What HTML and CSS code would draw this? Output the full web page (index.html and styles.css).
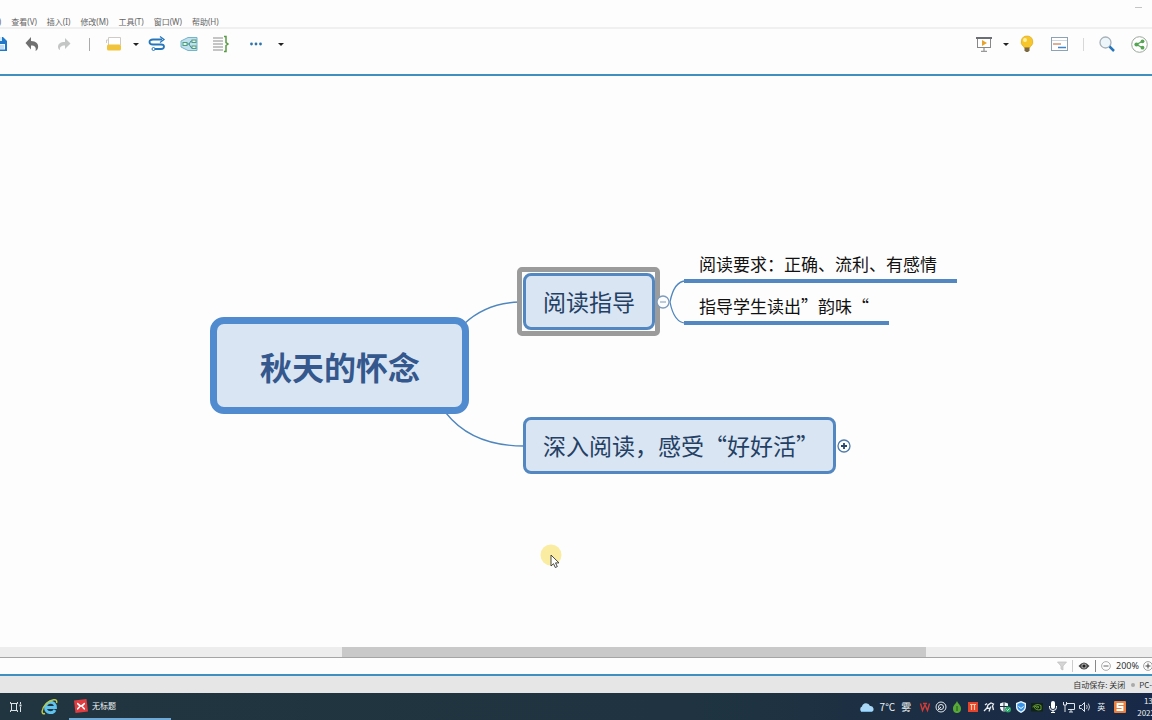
FILE: index.html
```html
<!DOCTYPE html>
<html lang="zh-CN">
<head>
<meta charset="utf-8">
<title>无标题</title>
<link rel="stylesheet" href="styles.css">
</head>
<body>
<div class="app">
  <header class="menubar">
    <nav class="menus">
      <button class="menu">编辑(E)</button>
      <button class="menu">查看(V)</button>
      <button class="menu">插入(I)</button>
      <button class="menu">修改(M)</button>
      <button class="menu">工具(T)</button>
      <button class="menu">窗口(W)</button>
      <button class="menu">帮助(H)</button>
    </nav>
    <button class="minimize" aria-label="最小化"></button>
  </header>

  <div class="toolbar">
    <div class="tools tools-left">
      <button class="tool" aria-label="保存"><svg width="16" height="16" viewBox="0 0 16 16"><path d="M1 1h10l4 4v10H1z" fill="#1f78c8"/><path d="M4 1h6v4H4z" fill="#d8ebfa"/><path d="M3 8h10v5.500H3z" fill="#eef7ff"/><path d="M4 10h8M4 12h8" stroke="#8cc0e8"/></svg></button>
      <button class="tool" aria-label="撤销"><svg width="14" height="16" viewBox="0 0 14 16"><path d="M6 1v4c5 0 8 3 7 7-.4 1.500-1.500 2.500-2.500 3 1-3.500-.5-5.500-4.500-5.500v4L.5 7z" fill="#707070"/></svg></button>
      <button class="tool" aria-label="重做"><svg width="14" height="16" viewBox="0 0 14 16"><path d="M8 2v4C3 6 1 8 1 11c0 1.500 1 3 2 3-.5-3 1-4.500 5-4.500V13l5.500-5.500z" fill="#c4c6c6"/></svg></button>
      <span class="divider"></span>
      <button class="tool" aria-label="主题"><svg width="18" height="16" viewBox="0 0 18 16"><path d="M3.500 9V1.500h12V9" fill="#fff" stroke="#cfcac4"/><path d="M1.500 7V4h2" fill="none" stroke="#cfcac4"/><rect x="2" y="8.500" width="14" height="6" rx="1.500" fill="#f0c43c"/></svg></button>
      <button class="caret" aria-label="主题选项"></button>
      <button class="tool" aria-label="联系"><svg width="18" height="18" viewBox="0 0 18 18" fill="none" stroke="#2776bb"><path d="M14 4.500H5c-2.500 0-3.500 1-3.500 2.500S3 9.500 5 9.500h8c2 0 3 .5 3 2s-1 2.500-3 2.500H7" stroke-width="1.800"/><path d="M12 1.500l4 3-4 3" stroke-width="1.300"/><circle cx="5.500" cy="14" r="1.500"/></svg></button>
      <button class="tool" aria-label="外框"><svg width="18" height="16" viewBox="0 0 18 16" fill="none"><path d="M1 5l7-3.500h9v13H8L1 11z" fill="#bfe0ec" stroke="#75b5cc"/><path d="M6 8h3l2-3h1M9 8l2 3.500h1" stroke="#408f8d"/><rect x="3" y="6.500" width="4" height="3" fill="#e5f4e8" stroke="#4e9c82"/><rect x="12" y="4" width="4" height="2.500" fill="#e5f4e8" stroke="#4e9c82"/><rect x="12" y="10" width="4" height="2.500" fill="#e5f4e8" stroke="#4e9c82"/></svg></button>
      <button class="tool" aria-label="概要"><svg width="18" height="18" viewBox="0 0 18 18" fill="none"><path d="M1 3h10M1 6h10M1 9h10M1 12h10M1 15h10" stroke="#b2b2b2" stroke-width="1.400"/><path d="M12 1.500h2v6l2 1.500-2 1.500v6h-2" stroke="#5a9a46" stroke-width="1.500"/></svg></button>
      <button class="tool tool-more" aria-label="更多"><svg width="14" height="4" viewBox="0 0 14 4" fill="#2d74ad"><circle cx="2.500" cy="2" r="1.400"/><circle cx="7" cy="2" r="1.400"/><circle cx="11.500" cy="2" r="1.400"/></svg></button>
      <button class="caret" aria-label="更多选项"></button>
    </div>
    <div class="tools tools-right">
      <button class="tool" aria-label="演示"><svg width="16" height="16" viewBox="0 0 16 16"><rect x="1.500" y="2.500" width="13" height="9" fill="#fff" stroke="#888"/><path d="M0 1h16v2H0z" fill="#6b6f75"/><path d="M6 4l5 3-5 3z" fill="#e8a32e"/><path d="M8 12v3M5 15.500h6" stroke="#999" stroke-width="1.300"/></svg></button>
      <button class="caret" aria-label="演示选项"></button>
      <button class="tool" aria-label="头脑风暴"><svg width="14" height="18" viewBox="0 0 14 18"><path d="M7 1a5.800 5.800 0 0 0-3.500 10.500L4.500 13h5l1-1.500A5.800 5.800 0 0 0 7 1z" fill="#f6c62c" stroke="#d9a51c" stroke-width=".6"/><circle cx="5" cy="5" r="2" fill="#fff0a0"/><path d="M4.500 12.500h5v3L8 17H6l-1.500-1.500z" fill="#7c6841"/></svg></button>
      <button class="tool" aria-label="甘特图"><svg width="17" height="15" viewBox="0 0 17 15"><rect x=".5" y=".5" width="16" height="13" fill="#fff" stroke="#8da2b5"/><path d="M1 3.500h15" stroke="#ccd8e2"/><path d="M2 7h8" stroke="#d29772" stroke-width="1.500"/><path d="M7 10.500h8" stroke="#3a86cf" stroke-width="1.500"/></svg></button>
      <span class="divider divider-light"></span>
      <button class="tool" aria-label="搜索"><svg width="16" height="16" viewBox="0 0 16 16"><circle cx="6.500" cy="6.500" r="5.500" fill="#edf6fb" stroke="#a8b0b8" stroke-width="1.300"/><path d="M10.500 10.500l4.500 4.500" stroke="#2776bb" stroke-width="2.500"/></svg></button>
      <button class="tool" aria-label="分享"><svg width="17" height="17" viewBox="0 0 17 17"><circle cx="8.500" cy="8.500" r="7.800" fill="#fff" stroke="#9aa79c"/><path d="M12 5L5.500 8.500 12 12" fill="none" stroke="#55a552" stroke-width="1.300"/><g fill="#55a552"><circle cx="11.500" cy="5.300" r="1.900"/><circle cx="5.500" cy="8.500" r="2.100"/><circle cx="11.500" cy="11.700" r="1.900"/></g></svg></button>
    </div>
  </div>

  <main class="canvas">
    <svg class="links" width="1000" height="500" viewBox="0 0 1000 500" fill="none" stroke="#4f86bd">
      <path d="M464 248Q486 227 520 226M446 337Q472 370 524 370" stroke-width="1.300"/>
      <path d="M670 226Q674 205 686 205M670 226Q674 247 686 247" stroke-width="1.300"/>
    </svg>
    <div class="topic root">秋天的怀念</div>
    <div class="selection"></div>
    <div class="topic branch guide">阅读指导</div>
    <button class="fold fold-guide" aria-label="折叠"><svg width="14" height="14" viewBox="0 0 14 14" fill="none" stroke="#7d9bbb"><circle cx="7" cy="7" r="6" fill="#fdfdfd" stroke-width="1.300"/><path d="M0 7h1M4 7h6"/></svg></button>
    <div class="leaf requirement">阅读要求：正确、流利、有感情</div>
    <div class="leaf charm">指导学生读出”韵味“</div>
    <div class="topic branch deep">深入阅读，感受“好好活”</div>
    <button class="fold fold-deep" aria-label="展开"><svg width="14" height="14" viewBox="0 0 14 14" fill="none"><circle cx="7" cy="7" r="6" fill="#fdfdfd" stroke="#4f7ba8" stroke-width="1.300"/><path d="M4 7h6M7 4v6" stroke="#27486d" stroke-width="1.800"/></svg></button>
    <svg class="pointer" width="24" height="26" viewBox="0 0 24 26"><circle cx="11" cy="11" r="10.500" fill="#faeca0"/><path d="M11 11v11l2.500-2.300 1.800 3.800 2-.9-1.800-3.700H19z" fill="#fff" stroke="#333" stroke-width=".9"/></svg>
  </main>

  <div class="scroll-track"><div class="scroll-thumb"></div></div>

  <div class="status">
    <button class="mini" aria-label="筛选"><svg width="10" height="10" viewBox="0 0 10 10"><path d="M.5 1h9L6 5v4L4 8V5z" fill="#d5d5d5" stroke="#bbb" stroke-width=".7"/></svg></button>
    <span class="bar"></span>
    <button class="mini" aria-label="显示"><svg width="12" height="10" viewBox="0 0 12 10"><path d="M.5 5Q6-2 11.500 5 6 12 .5 5z" fill="#444"/><circle cx="6" cy="5" r="2.600" fill="#aaa"/><circle cx="6" cy="5" r="1.600" fill="#222"/></svg></button>
    <span class="bar bar-dark"></span>
    <button class="mini" aria-label="缩小"><svg width="10" height="10" viewBox="0 0 10 10" fill="none" stroke="#666"><circle cx="5" cy="5" r="4.400" stroke="#999" stroke-width=".8"/><path d="M2.500 5h5"/></svg></button>
    <span class="zoom">200%</span>
    <button class="mini" aria-label="放大"><svg width="10" height="10" viewBox="0 0 10 10" fill="none" stroke="#444"><circle cx="5" cy="5" r="4.400" stroke="#888" stroke-width=".8"/><path d="M2.500 5h5M5 2.500v5"/></svg></button>
  </div>

  <div class="savebar">
    <span>自动保存: 关闭</span>
    <span class="dot"></span>
    <span class="host">PC-</span>
  </div>

  <footer class="taskbar">
    <button class="task" aria-label="任务视图"><svg width="12" height="12" viewBox="0 0 12 12" fill="none" stroke="#dce3e6"><path d="M.5 1v1.500h7V1M.5 11V9.500h7V11M1.500 2.500v7M6.500 2.500v7M10.500 1v2M10.500 6v5"/><path d="M9.500 4.500h2" stroke-width="2"/></svg></button>
    <button class="task task-ie" aria-label="Internet Explorer"><svg width="18" height="16" viewBox="0 0 18 16" fill="none"><path d="M4.500 8.500h10c0-7-9.500-7-10 0 0 6 7.500 6.500 9.500 2.500" stroke="#5fc3ee" stroke-width="2.800"/><path d="M15.500 4C17-1 10 0 5 5 0 10 0 16 4 14.500" stroke="#b9c94c" stroke-width="1.500"/></svg></button>
    <button class="task task-active"><svg width="14" height="14" viewBox="0 0 14 14"><path d="M0 1.500L12.500 0 14 12.500 1.500 14z" fill="#e13c40"/><path d="M3 4.500c1.500 0 2 2.500 4 2.500s2.500-2.500 4-2.500M3 10c1.500 0 2-3 4-3s2.500 3 4 3" fill="none" stroke="#fff" stroke-width="1.600"/></svg>无标题</button>
    <div class="tray">
      <button class="weather"><svg width="15" height="10" viewBox="0 0 15 10"><path d="M3 10a3 3 0 0 1 0-5.500A4.200 4.200 0 0 1 11 4a3 3 0 0 1 1 6z" fill="#a9d7f5"/><path d="M2 9.500h11" stroke="#6fb5e8"/></svg><span>7°C</span><span class="weather-kind">雾</span></button>
      <button class="tray-icon" aria-label="WPS"><svg viewBox="0 0 12 12" fill="none" stroke="#d43b35" stroke-width="1.400"><path d="M1.500 2.500l2 7L6 4l2.500 5.500 2-7M4 2.500h4"/></svg></button>
      <button class="tray-icon" aria-label="录屏"><svg viewBox="0 0 12 12" fill="none" stroke="#e4e8ec"><circle cx="6" cy="6" r="5"/><circle cx="6" cy="6" r="2.500"/><path d="M3 9l3-3"/></svg></button>
      <button class="tray-icon" aria-label="守护"><svg viewBox="0 0 12 12"><path d="M6 0c1 3 4 4 4 7.500S8 12 6 12 2 11 2 7.500 5 3 6 0z" fill="#58a936"/><path d="M6 5v5" stroke="#1d5b20"/></svg></button>
      <button class="tray-icon" aria-label="工具"><svg viewBox="0 0 12 12"><path d="M1 1h10v10H1z" fill="#e5432b"/><path d="M3 3.500h6M4.500 4v5M7.500 4v5" stroke="#ffc7a0" stroke-width="1.200"/></svg></button>
      <button class="tray-icon" aria-label="助手"><svg viewBox="0 0 12 12" fill="none" stroke="#eceff1" stroke-width="1.300"><path d="M1 10l3-3 3 .5-1 3M4 7l1-3 3-2 2.500 1-1 2 1 4M2 4l2-1.500M8 5.500L7 7.500"/></svg></button>
      <button class="tray-icon" aria-label="安全中心"><svg viewBox="0 0 12 12"><path d="M5 1l4 1.500V6c0 3-2 4-4 5-2-1-4-2-4-5V2.500z" fill="#f4f7f8"/><path d="M5 1v10M1 5.500h8" stroke="#1b2c42"/><circle cx="9" cy="8.500" r="3" fill="#29a768"/><path d="M7.500 8.500l1 1 2-2" fill="none" stroke="#fff" stroke-width=".8"/></svg></button>
      <button class="tray-icon" aria-label="电脑管家"><svg viewBox="0 0 12 12"><path d="M6 0l5 2v4c0 3-2.500 5-5 6-2.500-1-5-3-5-6V2z" fill="#edf7ff"/><path d="M6 1.500l3.700 1.500v3c0 2-2 3.500-3.700 4.500C4.300 9.500 2.300 8 2.300 6V3z" fill="#3894e8"/><path d="M3.500 5.500L6 7.500l2.500-2" fill="none" stroke="#fff"/></svg></button>
      <button class="tray-icon" aria-label="NVIDIA"><svg viewBox="0 0 12 12"><path d="M0 2h12v8.500H0z" fill="#102415"/><path d="M1.500 6q4-4 8.500-1.500v4Q5 10 3 6q3-2 5 0-1.500 2-3 0" fill="none" stroke="#679e36"/></svg></button>
      <button class="tray-icon" aria-label="麦克风"><svg viewBox="0 0 12 12"><rect x="4" y="0" width="4" height="8" rx="2" fill="#fff"/><path d="M2.500 5v1.500a3.500 3 0 0 0 7 0V5M6 9.500V12M4 11.500h4" fill="none" stroke="#fff"/></svg></button>
      <button class="tray-icon" aria-label="网络"><svg viewBox="0 0 12 12" fill="none" stroke="#dfe5ea"><path d="M4 2.500h7.500v6H5M6 11h4M8 9v2M.5 1v3h3V1M2 4v7"/></svg></button>
      <button class="tray-icon" aria-label="音量"><svg viewBox="0 0 12 12" fill="none" stroke="#dfe5ea"><path d="M.5 4.500h2l3-3v9l-3-3h-2z"/><path d="M7.500 4q1.500 2 0 4M9.300 2.500q2.500 3.500 0 7" stroke-width=".8"/></svg></button>
      <button class="tray-icon">英</button>
      <button class="tray-icon sogou" aria-label="搜狗输入法"><svg viewBox="0 0 12 12"><rect x="0" y="0" width="12" height="12" rx="1" fill="#e9803f"/><path d="M9.500 3H3.500v3h5v3h-6" fill="none" stroke="#fff" stroke-width="1.800"/></svg></button>
      <div class="clock"><span>13:</span><span>2022</span></div>
    </div>
  </footer>
</div>
</body>
</html>
```

FILE: styles.css
```css
* {
  box-sizing: border-box;
}

body {
  margin: 0;
  overflow: hidden;
  background: #fdfdfd;
  font-family: "Noto Sans CJK SC", "Noto Sans", sans-serif;
  color: #333;
}

button {
  flex: none;
  margin: 0;
  padding: 0;
  border: 0;
  background: none;
  font: inherit;
  color: inherit;
}

svg {
  display: block;
}

.app {
  display: flex;
  flex-direction: column;
  height: 100vh;
  overflow: hidden;
}

.menubar {
  flex: none;
  display: flex;
  justify-content: space-between;
  align-items: flex-start;
  height: 29px;
  border-bottom: 2px solid #f0f0f0;
}

.menus {
  display: flex;
  gap: 10px;
  margin-left: -24px;
  padding-top: 16px;
  font-family: "Noto Sans", "Noto Sans CJK SC", sans-serif;
  font-size: 8px;
  line-height: 11px;
  color: #666;
}

.menu {
  white-space: nowrap;
}

.minimize {
  width: 7px;
  height: 1px;
  margin: 7px 10px 0 0;
  background: #c4c4c4;
}

.toolbar {
  flex: none;
  display: flex;
  justify-content: space-between;
  height: 47px;
  padding-bottom: 15px;
  border-bottom: 2px solid #3f8fbf;
}

.tools {
  display: flex;
  align-items: center;
}

.tools-left {
  margin-left: -16px;
}

.tools-right {
  margin-right: -3px;
}

.tool {
  display: flex;
  justify-content: center;
  align-items: center;
  width: 32px;
  height: 24px;
}

.tool-more {
  width: 38px;
}

.caret {
  width: 11px;
  display: flex;
  justify-content: center;
}

.caret::before {
  content: "";
  border: 3px solid transparent;
  border-top-color: #222;
  border-bottom-width: 0;
}

.divider {
  width: 18px;
  height: 13px;
  background: linear-gradient(#aaa, #aaa) center / 1px 100% no-repeat;
}

.divider-light {
  width: 16px;
  background: linear-gradient(#d8d8d8, #d8d8d8) center / 1px 100% no-repeat;
}

.canvas {
  flex: 1;
  position: relative;
  min-height: 0;
  overflow: hidden;
}

.links {
  position: absolute;
  left: 0;
  top: 0;
}

.topic {
  position: absolute;
  background: #d9e5f2;
  white-space: nowrap;
}

.root {
  left: 210px;
  top: 241px;
  padding: 20px 42px 19px 43px;
  border: 7px solid #508bd0;
  border-radius: 14px;
  font-size: 32px;
  font-weight: 700;
  line-height: 44px;
  color: #34588d;
}

.branch {
  padding: 10px 17px 11px;
  border: 3px solid #5387c1;
  border-radius: 8px;
  font-size: 23px;
  line-height: 30px;
  color: #243f64;
}

.guide {
  left: 523px;
  top: 197px;
}

.deep {
  left: 523px;
  top: 341px;
  padding-right: 14px;
}

.selection {
  position: absolute;
  left: 517px;
  top: 191px;
  width: 143px;
  height: 69px;
  border: 5px solid #9b9b9b;
  border-radius: 5px;
}

.fold {
  position: absolute;
}

.fold-guide {
  left: 656px;
  top: 219px;
}

.fold-deep {
  left: 837px;
  top: 363px;
}

.leaf {
  position: absolute;
  left: 684px;
  padding: 0 20px 3px 15px;
  border-bottom: 4px solid #5387c1;
  font-size: 17px;
  line-height: 24px;
  color: #111;
  white-space: nowrap;
}

.requirement {
  top: 176px;
}

.charm {
  top: 218px;
}

.pointer {
  position: absolute;
  left: 540px;
  top: 468px;
}

.scroll-track {
  flex: none;
  height: 11px;
  background: #ededed;
  border-bottom: 1px solid #a5a5a5;
}

.scroll-thumb {
  width: 50.7%;
  height: 100%;
  margin-left: 29.7%;
  background: #c9c9c9;
}

.status {
  flex: none;
  display: flex;
  justify-content: flex-end;
  align-items: center;
  gap: 5px;
  height: 18px;
  margin-right: 0;
  padding-bottom: 1px;
  border-bottom: 2px solid #3f8fbf;
  font-family: "Noto Sans", sans-serif;
  font-size: 9px;
  line-height: 12px;
}

.mini:last-child {
  margin-right: -1px;
}

.bar {
  width: 1px;
  height: 12px;
  background: #ccc;
}

.bar-dark {
  background: #888;
}

.zoom {
  width: 22px;
}

.savebar {
  flex: none;
  display: flex;
  justify-content: flex-end;
  align-items: center;
  gap: 6px;
  height: 17px;
  background: #e6e6e6;
  font-size: 8px;
  line-height: 12px;
  white-space: nowrap;
}

.dot {
  width: 4px;
  height: 4px;
  border-radius: 50%;
  background: #aaa;
}

.host {
  margin-left: -2px;
}

.taskbar {
  flex: none;
  display: flex;
  justify-content: space-between;
  height: 27px;
  background: linear-gradient(90deg, #20353f, #1f3440 60%, #182848);
  color: #eef2f4;
  font-size: 8px;
}

.task {
  display: flex;
  align-items: center;
  width: 32px;
  padding-left: 10px;
}

.task-ie {
  width: 37px;
  padding-left: 9px;
}

.task-active {
  width: 102px;
  gap: 4px;
  padding-left: 5px;
  border-bottom: 2px solid #6faad6;
}

.tray {
  display: flex;
  align-items: center;
  margin-left: auto;
  margin-right: -3px;
}

.weather {
  display: flex;
  align-items: center;
  gap: 6px;
  margin-right: 6px;
  font-size: 10px;
}

.tray-icon {
  display: flex;
  justify-content: center;
  align-items: center;
  width: 16px;
  height: 16px;
}

.tray-icon svg {
  width: 12px;
  height: 12px;
}

.sogou {
  width: 22px;
}

.clock {
  display: flex;
  flex-direction: column;
  align-items: flex-end;
  margin-left: 6px;
  font-size: 8px;
  line-height: 12px;
}
```
